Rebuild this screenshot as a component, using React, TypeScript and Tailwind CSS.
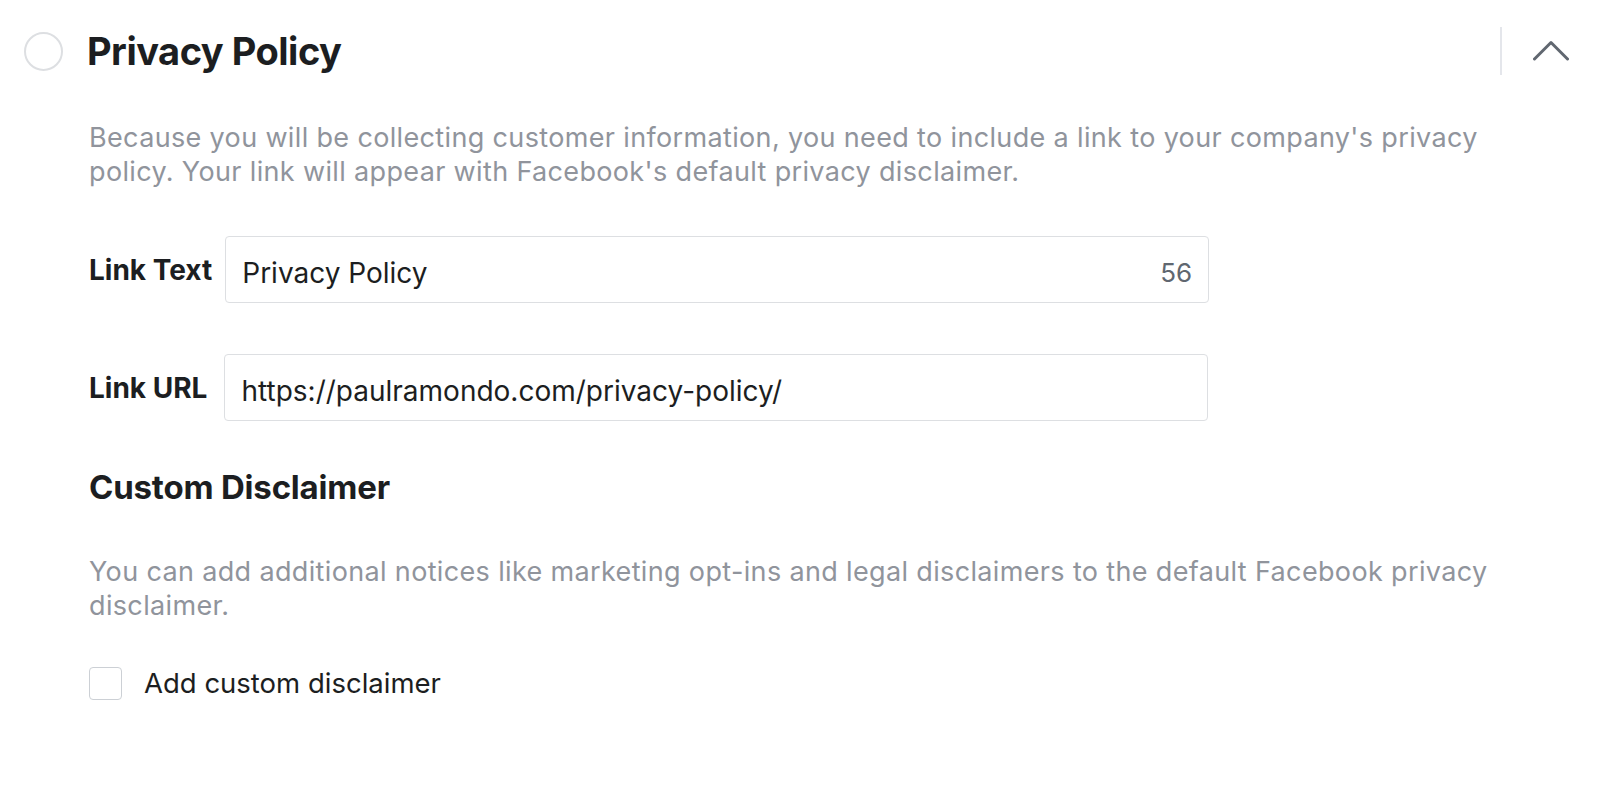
import React from "react";

const FONT = { fontFamily: 'Inter, "Liberation Sans", Arial, sans-serif' };

function Field({ label, value, counter, gap }: { label: string; value: string; counter?: string; gap: string }) {
  return (
    <div className={`flex items-center ${gap}`}>
      <span className="text-[28px] font-bold leading-[28px] text-[#1c1e21]">{label}</span>
      <div className="flex h-[67px] w-[984px] items-center justify-between rounded-[4px] border border-[#dddfe2] bg-white pl-[16px] pr-[16px] pt-[6px]">
        <span className="text-[28px] leading-[28px] text-[#1c1e21]">{value}</span>
        {counter && <span className="text-[26px] leading-[26px] text-[#606770]">{counter}</span>}
      </div>
    </div>
  );
}

export default function App() {
  return (
    <div className="min-h-[796px] w-[1600px] bg-white" style={FONT}>
      <div className="flex h-[102px] items-center pl-[24px] pr-[31px]">
        <div className="h-[39px] w-[39px] rounded-full border-2 border-[#dddfe2]" />
        <h1 className="ml-[24px] text-[38px] font-bold leading-[38px] tracking-[-0.5px] text-[#1c1e21]">
          Privacy Policy
        </h1>
        <div className="ml-auto h-[48px] w-[2px] bg-[#e4e6eb]" />
        <svg className="ml-[31px]" width="36" height="22" viewBox="0 0 36 22" fill="none">
          <path d="M1.5 19 L18 2.5 L34.5 19" stroke="#606770" strokeWidth="3" strokeLinecap="round" strokeLinejoin="round" />
        </svg>
      </div>

      <div className="pl-[89px] pr-[100px]">
        <p className="mt-[19px] text-[27px] leading-[34px] tracking-[0.35px] text-[#90949c]">
          Because you will be collecting customer information, you need to include a link to your company's privacy
          policy. Your link will appear with Facebook's default privacy disclaimer.
        </p>

        <div className="mt-[47px]">
          <Field label="Link Text" value="Privacy Policy" counter="56" gap="gap-[13px]" />
        </div>
        <div className="mt-[51px]">
          <Field label="Link URL" value="https://paulramondo.com/privacy-policy/" gap="gap-[17px]" />
        </div>

        <h2 className="mt-[46px] text-[33px] font-bold leading-[40px] tracking-[-0.2px] text-[#1c1e21]">
          Custom Disclaimer
        </h2>
        <p className="mt-[48px] text-[27px] leading-[34px] tracking-[0.35px] text-[#90949c]">
          You can add additional notices like marketing opt-ins and legal disclaimers to the default Facebook privacy
          disclaimer.
        </p>

        <label className="mt-[44px] flex items-center gap-[22px]">
          <span className="h-[33px] w-[33px] rounded-[4px] border border-[#ccd0d5] bg-white" />
          <span className="text-[27.5px] leading-[27px] text-[#1c1e21]">Add custom disclaimer</span>
        </label>
      </div>
    </div>
  );
}
